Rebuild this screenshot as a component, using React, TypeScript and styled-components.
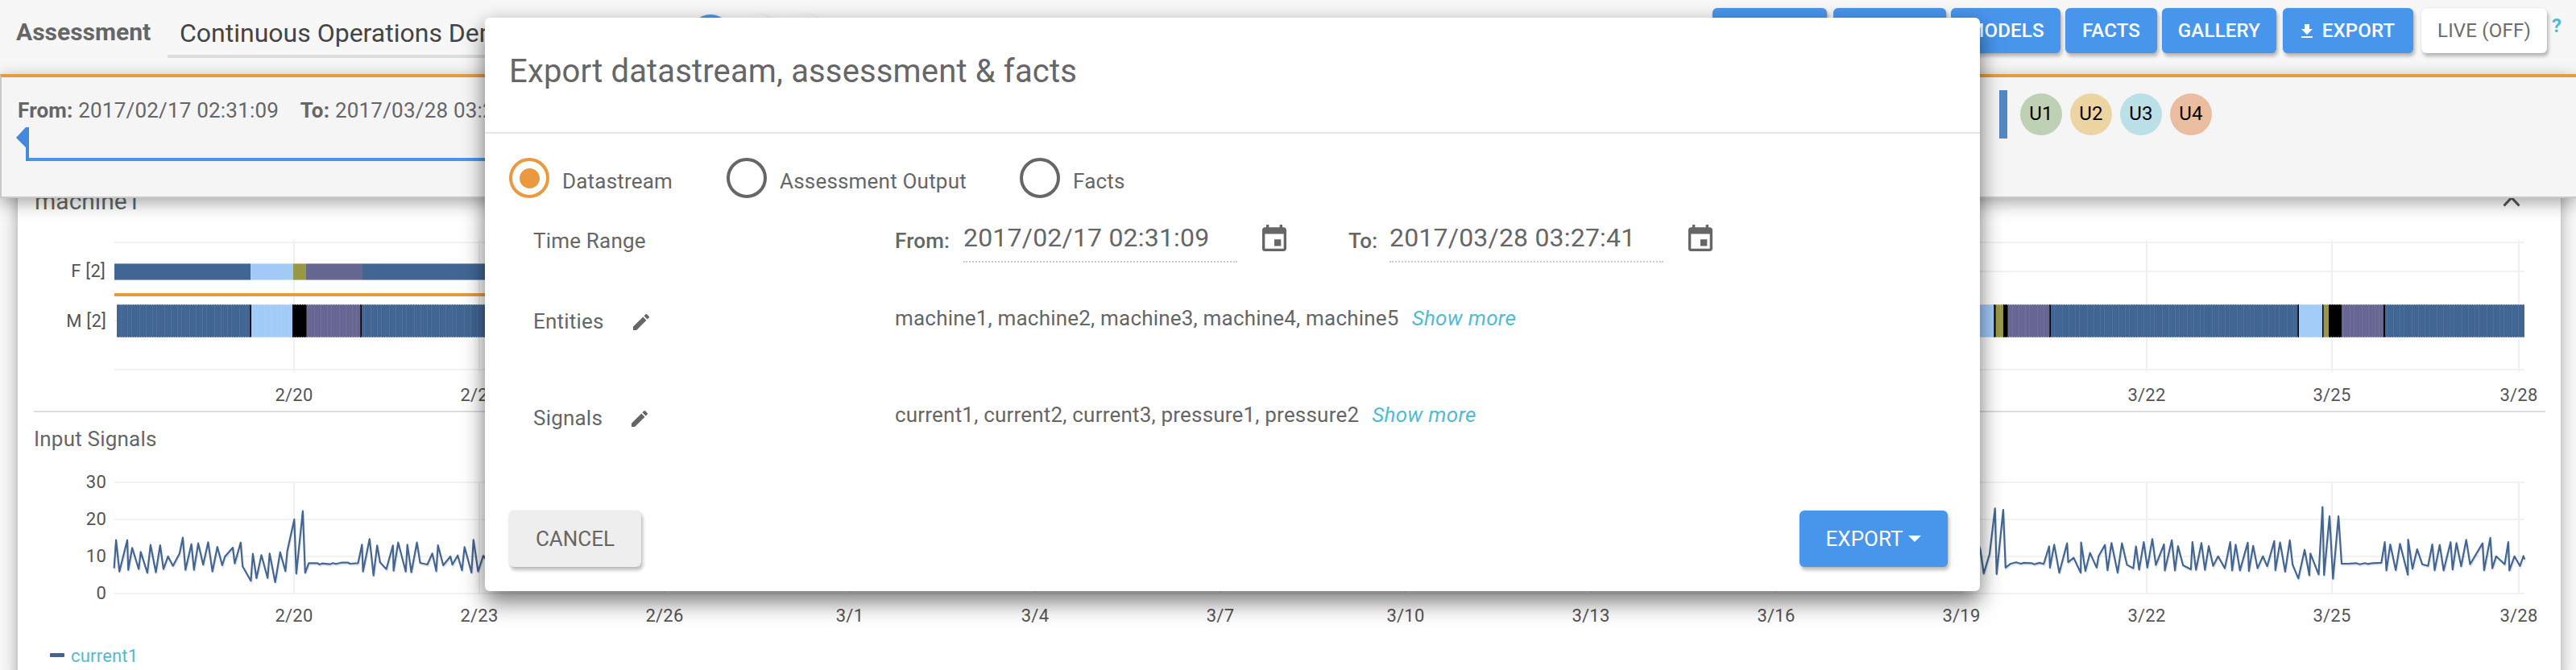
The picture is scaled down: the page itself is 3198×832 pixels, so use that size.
import React from "react";
import styled, { createGlobalStyle } from "styled-components";

const Global = createGlobalStyle`
  * { box-sizing: border-box; }
  body { margin: 0; font-family: Roboto, "Liberation Sans", sans-serif; letter-spacing: .2px; color: #666; background: #f7f7f7; overflow: hidden; }
`;

const ORANGE = "#ea993e";
const BLUE = "#4896ec";
const TEAL = "#50bbd3";
const C = { navy: "#426694", sky: "#a2cbf8", olive: "#989744", plum: "#686794", black: "#000" };

const Page = styled.div`width: 3198px; height: 832px; overflow: hidden; display: flex; flex-direction: column; position: relative;`;

const Header = styled.header`
  flex: none; height: 92px; background: #f7f7f7; display: flex; justify-content: space-between; align-items: flex-start; padding: 0 19px 0 20px;
`;
const HeaderLeft = styled.div`display: flex; align-items: flex-start;`;
const AppTitle = styled.div`font-size: 30px; font-weight: 700; line-height: 36px; padding-top: 22px; width: 188px; white-space: nowrap; letter-spacing: 0;`;
const NameInput = styled.div`
  width: 640px; height: 72px; padding: 23px 0 0 15px; border-bottom: 4px solid #ddd; font-size: 32px; line-height: 36px; color: #444; white-space: nowrap; letter-spacing: 0;
`;
const Steps = styled.div`display: flex; gap: 7px; padding: 18px 0 0 8px;`;
const Step = styled.div<{ $on?: boolean }>`
  width: 52px; height: 52px; border-radius: 50%; background: ${(p) => (p.$on ? "#4896ec" : "#f6f6f6")}; box-shadow: 2px 2px 5px rgba(0,0,0,.15);
`;
const Actions = styled.div`display: flex; padding-top: 10px;`;
const ToolButton = styled.div<{ $w: number; $gap: number; $plain?: boolean }>`
  width: ${(p) => p.$w}px; height: 56px; margin-right: ${(p) => p.$gap}px; border-radius: 6px; display: flex; align-items: center; justify-content: center;
  background: ${(p) => (p.$plain ? "#fff" : BLUE)}; color: ${(p) => (p.$plain ? "#6c6c6c" : "#fff")};
  font-size: 24px; line-height: 28px; font-weight: ${(p) => (p.$plain ? 400 : 500)}; box-shadow: 2px 4px 4px rgba(0,0,0,.26), 0 0 2px rgba(0,0,0,.12); white-space: nowrap;
`;
const DownloadIcon = styled.svg`margin-right: 12px;`;
const Help = styled.div`color: ${TEAL}; font-size: 24px; line-height: 28px; font-weight: 700; padding-top: 8px; width: 11px;`;

const Band = styled.section`
  flex: none; height: 154px; background: #f5f5f5; border: 2px solid #c9c9c9; border-top: 4px solid ${ORANGE}; border-right: 0;
  box-shadow: 0 6px 20px rgba(0,0,0,.35); display: flex; position: relative; z-index: 2;
`;
const RangeCol = styled.div`width: 2480px; padding: 26px 0 0 18px;`;
const RangeText = styled.div`font-size: 26px; line-height: 30px; padding-left: 2px; letter-spacing: .2px; white-space: pre; b { font-weight: 700; }`;
const RangeSlider = styled.svg`display: block; margin-top: 6px;`;
const Divider = styled.div`width: 10px; height: 60px; background: #5489c6; margin-top: 16px;`;
const Users = styled.div`display: flex; gap: 10px; padding: 20px 0 0 16px;`;
const User = styled.div<{ $bg: string }>`
  width: 52px; height: 52px; border-radius: 50%; background: ${(p) => p.$bg}; color: #000; font-size: 24px; line-height: 51px; text-align: center;
`;

const Card = styled.main`
  flex: 1; margin: -10px 18px -10px 20px; padding: 0 20px; background: #fff; border: 2px solid #ccc; border-right: 1px solid #ccc; border-bottom: 0;
  box-shadow: 0 4px 16px rgba(0,0,0,.3); display: flex; flex-direction: column;
`;
const CardHead = styled.div`flex: none; height: 53px; display: flex; justify-content: space-between; align-items: flex-start;`;
const CardTitle = styled.span`font-size: 30px; line-height: 23px; padding-left: 1px; letter-spacing: 0;`;
const Chevron = styled.svg`margin: 5px 30px 0 0;`;
const Chart = styled.svg`display: block; flex: none; margin-left: -42px; text { font-family: Roboto, sans-serif; font-size: 22px; fill: #555; }`;
const LegendText = styled.text`&& { fill: ${TEAL}; }`;
const Section = styled.div`
  flex: none; border-top: 2px solid #ddd; height: 70px; margin-right: -1px; padding: 18px 0 0 0; font-size: 26px; line-height: 30px;
`;

const Modal = styled.div`
  position: absolute; z-index: 5; left: 602px; top: 22px; width: 1856px; height: 712px; background: #fff; border-radius: 6px;
  box-shadow: 0 14px 28px rgba(0,0,0,.5), 0 0 20px rgba(0,0,0,.08); display: flex; flex-direction: column;
`;
const ModalTitle = styled.div`
  flex: none; height: 144px; border-bottom: 2px solid #e5e5e5; padding: 42px 0 0 30px; font-size: 40px; line-height: 50px; letter-spacing: .15px; white-space: nowrap;
`;
const Radios = styled.div`display: flex; padding: 30px 0 0 30px; height: 80px;`;
const RadioOption = styled.div<{ $w: number }>`display: flex; width: ${(p) => p.$w}px; font-size: 26px; line-height: 30px; white-space: nowrap;`;
const Radio = styled.div<{ $on?: boolean }>`
  width: 50px; height: 50px; border-radius: 50%; border: 4px solid ${(p) => (p.$on ? ORANGE : "#666")}; margin-right: 16px; display: flex; align-items: center; justify-content: center;
  &::after { content: ""; width: 25px; height: 25px; border-radius: 50%; background: ${(p) => (p.$on ? ORANGE : "transparent")}; }
`;
const RadioLabel = styled.span`padding-top: 14px;`;
const Row = styled.div<{ $h: number }>`display: flex; height: ${(p) => p.$h}px; padding-left: 60px; font-size: 26px; line-height: 30px; white-space: nowrap;`;
const RowLabel = styled.div<{ $top: number; $gap?: number }>`width: 449px; padding-top: ${(p) => p.$top}px; display: flex; gap: ${(p) => p.$gap ?? 0}px;`;
const Pencil = styled.svg`margin-top: 6px;`;
const RowValue = styled.div<{ $top: number }>`padding-top: ${(p) => p.$top}px;`;
const ShowMore = styled.span`color: ${TEAL}; font-style: italic; padding-left: 16px; letter-spacing: .3px;`;
const FieldLabel = styled.div<{ $w: number }>`width: ${(p) => p.$w}px; font-weight: 500; padding-top: 38px;`;
const DateField = styled.div`width: 340px; height: 80px; border-bottom: 2px dotted #ccc; font-size: 32px; line-height: 38px; padding: 30px 0 0 0;`;
const CalendarIcon = styled.svg<{ $gap: number }>`margin: 33px ${(p) => p.$gap}px 0 31px;`;
const Footer = styled.div`display: flex; justify-content: space-between; align-items: flex-start; padding: 0 40px 0 30px; margin-top: auto; height: 100px;`;
const FootButton = styled.div<{ $w: number; $primary?: boolean }>`
  width: ${(p) => p.$w}px; height: 70px; border-radius: 6px; display: flex; align-items: center; justify-content: center; font-size: 26px; line-height: 30px; letter-spacing: 0;
  background: ${(p) => (p.$primary ? BLUE : "#eee")}; color: ${(p) => (p.$primary ? "#fff" : "#666")}; box-shadow: 2px 4px 4px rgba(0,0,0,.26), 0 0 2px rgba(0,0,0,.12);
`;
const Caret = styled.svg`margin-left: 7px;`;

const TICKS: [string, number][] = [
  ["2/20", 365], ["2/23", 595], ["2/26", 825], ["3/1", 1055], ["3/4", 1285], ["3/7", 1515], ["3/10", 1745],
  ["3/13", 1975], ["3/16", 2205], ["3/19", 2435], ["3/22", 2665], ["3/25", 2895], ["3/28", 3127],
];
const STATE_LABELS = TICKS.filter(([, x]) => x < 600 || x > 2500);

type Seg = [number, number, string];
const F_SEGS: Seg[] = [[142, 311, C.navy], [311, 364, C.sky], [364, 380, C.olive], [380, 450, C.plum], [450, 900, C.navy]];
const M_SEGS: Seg[] = [
  [145, 310.5, C.navy], [310.5, 312, C.black], [312, 363, C.sky], [363, 380.5, C.black], [380.5, 447.5, C.plum], [447.5, 449, C.black],
  [449, 2400, C.navy], [2400, 2475.5, C.sky], [2475.5, 2477.5, C.black], [2477.5, 2487, C.olive], [2487, 2492.5, C.black],
  [2492.5, 2544.5, C.plum], [2544.5, 2546, C.black], [2546, 2852.5, C.navy], [2852.5, 2854, C.black], [2854, 2883, C.sky],
  [2883, 2884.5, C.black], [2884.5, 2891, C.olive], [2891, 2907, C.black], [2907, 2959, C.plum], [2959, 2961, C.black], [2961, 3134, C.navy],
];
const BLACK_SEGS = M_SEGS.filter(([, , c]) => c === C.black);

const LEFT = "347,869 353,764 363,881 387,764 390,875 402,793 422,872 428,808 448,886 458,782 474,884 487,783 497,872 511,825 526,860 546,814 556,755 564,875 582,779 590,875 603,776 618,856 633,772 646,881 661,789 676,858 684,826 708,792 714,851 732,773 738,862 763,916 769,815 780,906 795,820 814,905 820,814 837,921 852,809 868,880 874,804 895,687 901,889 921,656 928,886 939,850 966,850 972,855 980,851 1003,854 1013,850 1022,853 1038,848 1059,848 1065,852 1089,850 1101,781 1104,881 1124,760 1136,896 1147,784 1156,847 1175,872 1195,784 1197,878 1211,773 1234,881 1239,781 1251,884 1268,773 1278,849 1300,855 1315,814 1327,880 1332,783 1348,858 1370,825 1376,856 1392,821 1405,877 1413,790 1434,885 1440,763 1454,881 1470,822 1486,850";
const RIGHT = "30,1110 38,1143 47,1228 62,1158 76,998 80,1230 97,1003 103,1207 115,1194 130,1188 143,1193 150,1190 170,1191 177,1195 190,1190 201,1194 215,1132 217,1207 228,1126 241,1225 261,1121 264,1188 278,1172 296,1225 297,1118 308,1219 320,1155 337,1207 342,1167 358,1127 365,1216 375,1120 391,1225 402,1121 415,1197 431,1209 438,1132 446,1214 458,1117 467,1207 480,1106 489,1198 510,1125 512,1217 530,1110 538,1217 546,1131 559,1199 579,1213 583,1117 592,1215 606,1120 615,1215 625,1131 636,1201 649,1167 666,1209 680,1117 685,1217 694,1126 705,1217 725,1119 728,1219 739,1130 750,1209 764,1167 775,1202 793,1113 796,1216 808,1118 821,1221 833,1110 840,1196 855,1245 871,1144 883,1234 886,1157 907,1231 917,993 921,1233 935,1026 944,1246 958,1026 966,1193 983,1193 1003,1191 1013,1195 1026,1191 1033,1194 1045,1191 1068,1190 1077,1117 1081,1217 1091,1125 1105,1216 1116,1123 1136,1232 1137,1108 1148,1211 1160,1142 1173,1195 1188,1201 1199,1125 1205,1216 1218,1127 1228,1217 1246,1117 1251,1214 1261,1120 1273,1202 1286,1109 1296,1195 1328,1121 1332,1216 1348,1102 1353,1209 1363,1167 1385,1195 1394,1117 1397,1217 1410,1167 1424,1201 1433,1166 1436,1178";
const scale = (s: string, x0: number, sx: number, y0: number, sy: number) =>
  s.split(" ").map((p) => { const [x, y] = p.split(",").map(Number); return `${(x0 + x / sx).toFixed(1)},${(y0 + y / sy).toFixed(1)}`; }).join(" ");
const SIGNAL = scale(LEFT, 0, 2.45, 416, 3) + " " + scale(RIGHT, 2440, 2.0686, 280, 2.8406);

const StateChart = () => (
  <Chart width={3150} height={219} viewBox="0 291 3150 219">
    <defs>
      <pattern id="ribs" width="31" height="41" patternUnits="userSpaceOnUse">
        <path d="M3.5 0V41M8.5 0V41M18.5 0V41M26.5 0V41" stroke="#fff" strokeOpacity=".06" strokeWidth="1" />
      </pattern>
    </defs>
    {[301, 337, 398, 459].map((y) => <rect key={y} x={142} y={y - 1} width={2992} height={2} fill="#f2f2f2" />)}
    {TICKS.map(([t, x]) => <rect key={t} x={x - 1} y={298} width={2} height={164} fill="#f0f0f0" />)}
    {F_SEGS.map(([a, b, c]) => <rect key={a} x={a} y={327} width={b - a} height={21} fill={c} />)}
    <path d="M142 327.5H900M142 347.5H900" stroke="#fff" strokeOpacity=".4" />
    <rect x={142} y={364} width={758} height={4} fill={ORANGE} />
    {M_SEGS.map(([a, b, c]) => <rect key={a} x={a} y={378} width={b - a} height={41} fill={c} />)}
    <rect x={145} y={378} width={2989} height={41} fill="url(#ribs)" />
    {BLACK_SEGS.map(([a, b, c]) => <rect key={a} x={a} y={378} width={b - a} height={41} fill={c} />)}
    <path d="M145 378.5H3134M145 418.5H3134" stroke="#fff" strokeOpacity=".4" strokeDasharray="2 1" />
    <text x={131} y={344} textAnchor="end">F [2]</text>
    <text x={132} y={406} textAnchor="end">M [2]</text>
    {STATE_LABELS.map(([t, x]) => <text key={t} x={x} y={498} textAnchor="middle">{t}</text>)}
  </Chart>
);

const SignalChart = () => (
  <Chart width={3150} height={260} viewBox="0 580 3150 260">
    {[30, 20, 10, 0].map((v, i) => (
      <g key={v}>
        <rect x={142} y={598 + i * 46} width={2992} height={2} fill="#f2f2f2" />
        <text x={132} y={606 + i * 46} textAnchor="end">{v}</text>
      </g>
    ))}
    {TICKS.map(([t, x]) => (
      <g key={t}>
        <rect x={x - 1} y={598} width={2} height={140} fill="#f0f0f0" />
        <text x={x} y={772} textAnchor="middle">{t}</text>
      </g>
    ))}
    <polyline points={SIGNAL} transform="translate(1 2)" fill="none" stroke="#000" strokeOpacity=".1" strokeWidth={2} />
    <polyline points={SIGNAL} fill="none" stroke="#426694" strokeWidth={2.2} strokeLinejoin="round" />
    <rect x={62} y={811} width={18} height={5} rx={1} fill="#426694" />
    <LegendText x={88} y={822}>current1</LegendText>
  </Chart>
);

const PencilIcon = () => (
  <Pencil width={20} height={20} viewBox="3 3 18 18">
    <path fill="#666" d="M3 17.25V21h3.75L17.81 9.94l-3.75-3.75L3 17.25zM20.71 7.04a1 1 0 0 0 0-1.41l-2.34-2.34a1 1 0 0 0-1.41 0l-1.83 1.83 3.75 3.75 1.83-1.83z" />
  </Pencil>
);
const Calendar = ({ gap }: { gap: number }) => (
  <CalendarIcon $gap={gap} width={30} height={33} viewBox="3 1 18 20" preserveAspectRatio="none">
    <path fill="#666" d="M17 12h-5v5h5v-5zM16 1v2H8V1H6v2H5c-1.11 0-1.99.9-1.99 2L3 19a2 2 0 0 0 2 2h14c1.1 0 2-.9 2-2V5c0-1.1-.9-2-2-2h-1V1h-2zm3 18H5V8h14v11z" />
  </CalendarIcon>
);

export default function App() {
  return (
    <Page>
      <Global />
      <Header>
        <HeaderLeft>
          <AppTitle>Assessment</AppTitle>
          <NameInput>Continuous Operations Demo</NameInput>
          <Steps><Step $on /><Step /><Step /></Steps>
        </HeaderLeft>
        <Actions>
          <ToolButton $w={142} $gap={8} />
          <ToolButton $w={140} $gap={6} />
          <ToolButton $w={136} $gap={6}>MODELS</ToolButton>
          <ToolButton $w={114} $gap={6}>FACTS</ToolButton>
          <ToolButton $w={142} $gap={8}>GALLERY</ToolButton>
          <ToolButton $w={162} $gap={10}>
            <DownloadIcon width={14} height={17} viewBox="5 3 14 17"><path fill="#fff" d="M19 9h-4V3H9v6H5l7 7 7-7zM5 18v2h14v-2H5z" /></DownloadIcon>
            EXPORT
          </ToolButton>
          <ToolButton $w={156} $gap={6} $plain>LIVE (OFF)</ToolButton>
          <Help>?</Help>
        </Actions>
      </Header>
      <Band>
        <RangeCol>
          <RangeText><b>From:</b> 2017/02/17 02:31:09    <b>To:</b> 2017/03/28 03:27:41</RangeText>
          <RangeSlider width={2400} height={42}>
            <rect x={12} y={38} width={2380} height={4} fill={BLUE} />
            <path d="M12 0H16V42H12V25L0 13Z" fill="#4489df" />
          </RangeSlider>
        </RangeCol>
        <Divider />
        <Users>
          <User $bg="#bfd1b4">U1</User>
          <User $bg="#ecd5a3">U2</User>
          <User $bg="#bbe0e8">U3</User>
          <User $bg="#ebbda0">U4</User>
        </Users>
      </Band>
      <Card>
        <CardHead>
          <CardTitle>machine1</CardTitle>
          <Chevron width={22} height={14}><path d="M1.5 12.5L11 2.5L20.5 12.5" fill="none" stroke="#555" strokeWidth={3} /></Chevron>
        </CardHead>
        <StateChart />
        <Section>Input Signals</Section>
        <SignalChart />
      </Card>
      <Modal>
        <ModalTitle>Export datastream, assessment &amp; facts</ModalTitle>
        <Radios>
          <RadioOption $w={270}><Radio $on /><RadioLabel>Datastream</RadioLabel></RadioOption>
          <RadioOption $w={364}><Radio /><RadioLabel>Assessment Output</RadioLabel></RadioOption>
          <RadioOption $w={200}><Radio /><RadioLabel>Facts</RadioLabel></RadioOption>
        </Radios>
        <Row $h={120}>
          <RowLabel $top={38}>Time Range</RowLabel>
          <FieldLabel $w={85}>From:</FieldLabel>
          <DateField>2017/02/17 02:31:09</DateField>
          <Calendar gap={77} />
          <FieldLabel $w={51}>To:</FieldLabel>
          <DateField>2017/03/28 03:27:41</DateField>
          <Calendar gap={0} />
        </Row>
        <Row $h={120}>
          <RowLabel $top={18} $gap={36}>Entities <PencilIcon /></RowLabel>
          <RowValue $top={14}>machine1, machine2, machine3, machine4, machine5<ShowMore>Show more</ShowMore></RowValue>
        </Row>
        <Row $h={100}>
          <RowLabel $top={18} $gap={36}>Signals <PencilIcon /></RowLabel>
          <RowValue $top={14}>current1, current2, current3, pressure1, pressure2<ShowMore>Show more</ShowMore></RowValue>
        </Row>
        <Footer>
          <FootButton $w={164}>CANCEL</FootButton>
          <FootButton $w={184} $primary>
            EXPORT
            <Caret width={16} height={8}><path d="M0 0H16L8 8Z" fill="#fff" /></Caret>
          </FootButton>
        </Footer>
      </Modal>
    </Page>
  );
}
